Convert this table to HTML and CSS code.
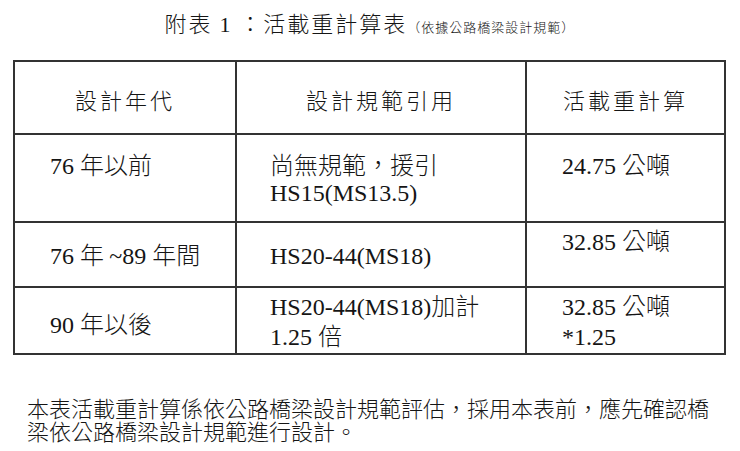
FILE: index.html
```html
<!DOCTYPE html>
<html lang="zh-Hant">
<head>
<meta charset="utf-8">
<title>附表1：活載重計算表</title>
<link rel="stylesheet" href="styles.css">
</head>
<body>
<div class="page">
  <h1 class="title">附表 <span class="latin">1</span> ：活載重計算表<span class="title-note">（依據公路橋梁設計規範）</span></h1>
  <table class="load-table">
    <colgroup>
      <col class="col-year">
      <col class="col-spec">
      <col class="col-load">
    </colgroup>
    <tr class="row-head">
      <th>設計年代</th>
      <th>設計規範引用</th>
      <th>活載重計算</th>
    </tr>
    <tr class="row-1">
      <td class="raised"><span class="latin">76 </span>年以前</td>
      <td>尚無規範，援引<br><span class="latin">HS15(MS13.5)</span></td>
      <td class="raised"><span class="latin">24.75 </span>公噸</td>
    </tr>
    <tr class="row-2">
      <td><span class="latin">76 </span>年 <span class="latin">~89 </span>年間</td>
      <td><span class="latin">HS20-44(MS18)</span></td>
      <td class="raised"><span class="latin">32.85 </span>公噸</td>
    </tr>
    <tr class="row-3">
      <td class="lowered"><span class="latin">90 </span>年以後</td>
      <td><span class="latin">HS20-44(MS18)</span>加計<br><span class="latin">1.25 </span>倍</td>
      <td><span class="latin">32.85 </span>公噸<br><span class="latin">*1.25</span></td>
    </tr>
  </table>
  <p class="note">本表活載重計算係依公路橋梁設計規範評估，採用本表前，應先確認橋梁依公路橋梁設計規範進行設計。</p>
</div>
</body>
</html>
```

FILE: styles.css
```css
html, body {
  margin: 0;
  padding: 0;
  background: #ffffff;
}

.page {
  width: 740px;
  height: 451px;
  overflow: hidden;
  color: #151515;
  font-family: "Noto Sans CJK TC", sans-serif;
  font-weight: 300;
}

.latin {
  font-family: "Liberation Serif", serif;
  font-weight: 400;
}

.title {
  margin: 10px 0 0 0;
  font-size: 22px;
  line-height: 24px;
  font-weight: 300;
  letter-spacing: 2px;
  text-align: center;
}

.title-note {
  font-size: 13px;
  letter-spacing: 1px;
}

.load-table {
  margin: 21px 0 0 13px;
  width: 711px;
  border-collapse: collapse;
  table-layout: fixed;
  font-size: 24px;
  line-height: 27px;
}

.col-year { width: 222px; }
.col-spec { width: 290px; }
.col-load { width: 199px; }

.load-table th,
.load-table td {
  border: 2px solid #333333;
  padding: 0 0 0 33px;
  vertical-align: middle;
  text-align: left;
  font-weight: 300;
}

.load-table th {
  padding: 4px 0 0 0;
  text-align: center;
  font-size: 22px;
  letter-spacing: 3px;
}

.load-table td:first-child,
.load-table td:last-child {
  padding-left: 35px;
}

.load-table td.raised {
  padding-bottom: 27px;
}

.load-table td.lowered {
  padding-top: 6px;
}

.row-head { height: 73px; }
.row-1 { height: 88px; }
.row-2 { height: 65px; }
.row-3 { height: 67px; }

.note {
  margin: 41px 0 0 0;
  padding: 0 20px 0 27px;
  font-size: 22px;
  line-height: 23px;
  font-weight: 300;
}
```
